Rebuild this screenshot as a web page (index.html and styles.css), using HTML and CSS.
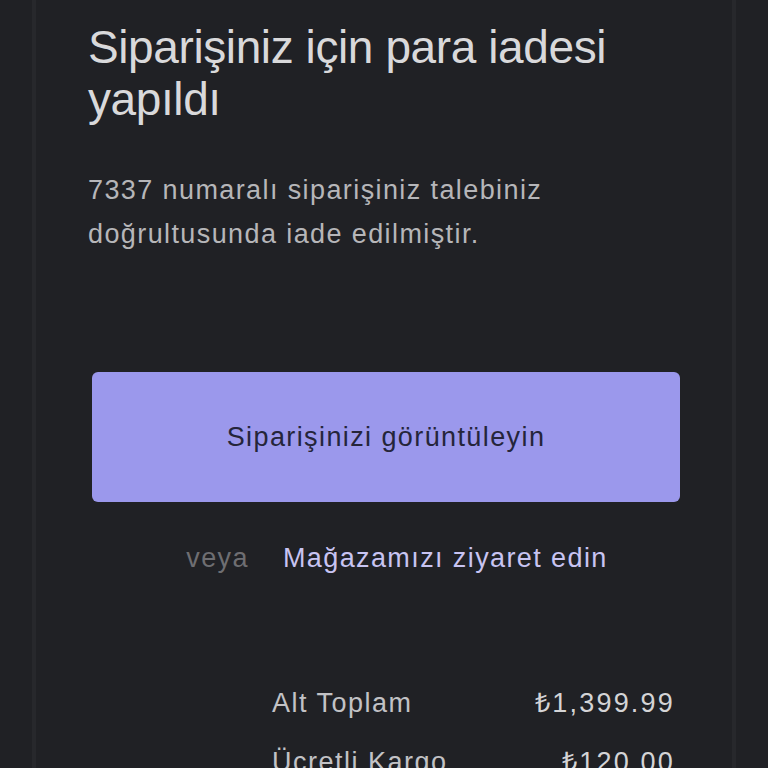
FILE: index.html
```html
<!DOCTYPE html>
<html lang="tr">
<head>
    <meta charset="UTF-8">
    <meta name="viewport" content="width=device-width, initial-scale=1.0">
    <title>Para iadesi</title>
    <link rel="stylesheet" href="styles.css">
</head>
<body>
    <div class="page">
        <div class="card">
            <h1 class="title">Siparişiniz için para iadesi yapıldı</h1>
            <p class="lead">7337 numaralı siparişiniz talebiniz doğrultusunda iade edilmiştir.</p>

            <a class="button" href="#">Siparişinizi görüntüleyin</a>

            <div class="alt-link">
                <span class="or">veya</span>
                <a class="store" href="#">Mağazamızı ziyaret edin</a>
            </div>

            <div class="totals">
                <div class="row">
                    <span>Alt Toplam</span>
                    <span class="amount">₺1,399.99</span>
                </div>
                <div class="row">
                    <span>Ücretli Kargo</span>
                    <span class="amount">₺120.00</span>
                </div>
            </div>
        </div>
    </div>
</body>
</html>
```

FILE: styles.css
```css
body {
    margin: 0;
    padding: 0;
    background: #202125;
    font-family: 'Liberation Sans', Arial, sans-serif;
    color: #d9d9db;
    overflow: hidden;
}

.page {
    padding: 0 32px;
    height: 768px;
}

.card {
    border-left: 4px solid #27282c;
    border-right: 4px solid #27282c;
    padding: 21px 52px 0 52px;
    height: 100%;
    box-sizing: border-box;
}

.title {
    margin: 0;
    font-size: 46px;
    font-weight: 400;
    line-height: 52px;
    letter-spacing: -0.4px;
    color: #d9d9db;
    max-width: 560px;
}

.lead {
    margin: 43px 0 0;
    font-size: 27px;
    line-height: 44px;
    letter-spacing: 1.4px;
    color: #b6b6b9;
    max-width: 500px;
}

.button {
    display: flex;
    align-items: center;
    justify-content: center;
    height: 130px;
    margin: 116px 0 0 4px;
    border-radius: 6px;
    background: #9b98ec;
    color: #25253a;
    font-size: 27px;
    letter-spacing: 1.4px;
    text-decoration: none;
}

.alt-link {
    display: flex;
    justify-content: center;
    gap: 34px;
    margin-top: 39px;
    padding-left: 26px;
    font-size: 27px;
    line-height: 34px;
    letter-spacing: 1.4px;
}

.alt-link .or {
    color: #6e6e72;
}

.alt-link .store {
    color: #c8c4f2;
    text-decoration: none;
}

.totals {
    margin: 99px 5px 0 184px;
}

.totals .row {
    display: flex;
    justify-content: space-between;
    font-size: 27px;
    line-height: 59px;
    letter-spacing: 1.5px;
    color: #c2c2c5;
}

.totals .amount {
    letter-spacing: 2.2px;
    color: #d4d4d6;
}
```
